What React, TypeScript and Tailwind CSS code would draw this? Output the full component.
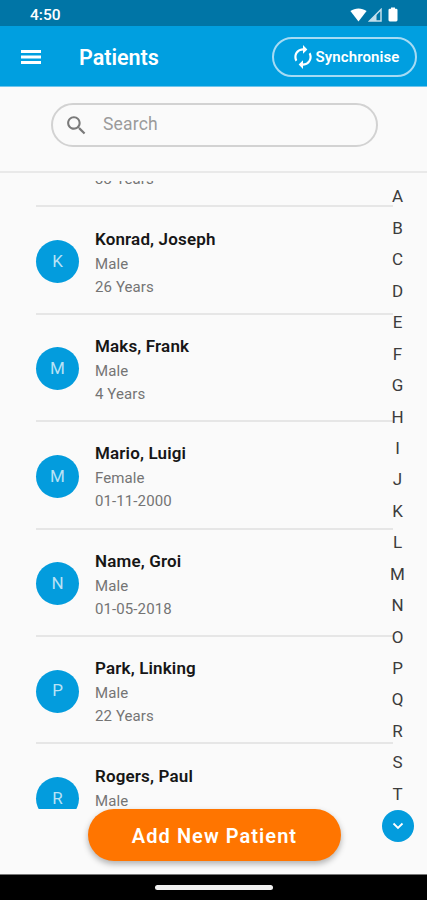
import React from "react";

type Patient = { name: string; gender: string; age: string };

const patients: Patient[] = [
  { name: "Jones, Mary", gender: "Female", age: "33 Years" },
  { name: "Konrad, Joseph", gender: "Male", age: "26 Years" },
  { name: "Maks, Frank", gender: "Male", age: "4 Years" },
  { name: "Mario, Luigi", gender: "Female", age: "01-11-2000" },
  { name: "Name, Groi", gender: "Male", age: "01-05-2018" },
  { name: "Park, Linking", gender: "Male", age: "22 Years" },
  { name: "Rogers, Paul", gender: "Male", age: "41 Years" },
];

const letters = "ABCDEFGHIJKLMNOPQRST".split("");

function StatusBar() {
  return (
    <div className="flex h-[26px] shrink-0 items-center justify-between bg-[#0075a6] pl-[30px] pr-[29px] pt-[3px] text-white">
      <span className="pt-[2px] text-[15.5px] font-medium leading-none">4:50</span>
      <div className="flex items-center">
        <svg className="mr-[1px]" width="17" height="14" viewBox="0 0 17 14">
          <path d="M0.4 3.1C5 -0.5 12 -0.5 16.6 3.1L8.5 13.5z" fill="currentColor" />
        </svg>
        <svg className="mr-[6px]" width="14" height="14" viewBox="0 0 14 14">
          <path d="M13 1.5V13H1.5z" fill="none" stroke="#c3dfec" strokeWidth="1.5" />
          <path d="M8.5 6V13H1.5z" fill="#c3dfec" />
        </svg>
        <svg width="10" height="15" viewBox="0 0 10 15">
          <path d="M3 0.4h4v1.4h1.2q1.3 0 1.3 1.3v10q0 1.4-1.3 1.4H1.8Q0.5 14.5 0.5 13.1v-10q0-1.3 1.3-1.3H3z" fill="currentColor" />
        </svg>
      </div>
    </div>
  );
}

function AppBar() {
  return (
    <header className="flex h-[61px] shrink-0 items-center border-b border-[#6fc5ec] bg-[#009fe0] pl-[21px] pr-[10px] pt-[2px] text-white">
      <svg width="20" height="14" viewBox="0 0 20 14" fill="currentColor">
        <path d="M0 0h20v3H0zM0 5.5h20v3H0zM0 11h20V14H0z" />
      </svg>
      <h1 className="ml-[38px] grow pt-[2px] text-[21.5px] font-semibold leading-none">Patients</h1>
      <button className="flex h-10 w-[145px] items-center rounded-full border-2 border-[#a5dbf4] pl-[15.5px]">
        <svg width="26" height="26" viewBox="0 0 24 24" fill="currentColor">
          <path d="M12 6v3l4-4-4-4v3c-4.42 0-8 3.58-8 8 0 1.57.46 3.03 1.24 4.26L6.7 14.8c-.45-.83-.7-1.79-.7-2.8 0-3.31 2.69-6 6-6zm6.76 1.74L17.3 9.2c.44.84.7 1.79.7 2.8 0 3.31-2.69 6-6 6v-3l-4 4 4 4v-3c4.42 0 8-3.58 8-8 0-1.57-.46-3.03-1.24-4.26z" />
        </svg>
        <span className="text-[15px] font-semibold leading-[20px] tracking-[0.1px]">Synchronise</span>
      </button>
    </header>
  );
}

function SearchArea() {
  return (
    <div className="h-[86px] shrink-0 border-b-2 border-[#e9e9e9] pl-[51px] pt-[16px]">
      <div className="flex h-[44px] w-[327px] items-center rounded-full border-2 border-[#d2d2d2] pl-[11px]">
        <svg width="25" height="25" viewBox="0 0 24 24" fill="#7a7a7a">
          <path d="M15.5 14h-.79l-.28-.27C15.41 12.59 16 11.11 16 9.5 16 5.91 13.09 3 9.5 3S3 5.91 3 9.5 5.91 16 9.5 16c1.61 0 3.09-.59 4.23-1.57l.27.28v.79l5 4.99L20.49 19l-4.99-5zm-6 0C7.01 14 5 11.99 5 9.5S7.01 5 9.5 5 14 7.01 14 9.5 11.99 14 9.5 14z" />
        </svg>
        <span className="mb-[2px] ml-[14px] text-[17.5px] leading-[24px] tracking-[0.2px] text-[#9b9b9b]">Search</span>
      </div>
    </div>
  );
}

function PatientRow({ name, gender, age }: Patient) {
  return (
    <li className="flex h-[107.4px] items-center border-b-2 border-[#e6e6e6]">
      <div className="mt-[3px] flex size-[43px] items-center justify-center rounded-full bg-[#039cdd] text-[17px] text-[#b9e2f5]">
        {name[0]}
      </div>
      <div className="ml-4 mt-[6px] whitespace-nowrap text-[15px] leading-[23px] tracking-[0.1px] text-[#747474]">
        <p className="mb-[2px] text-[17px] font-semibold tracking-[0.15px] text-[#161616]">{name}</p>
        <p>{gender}</p>
        <p>{age}</p>
      </div>
    </li>
  );
}

export default function App() {
  return (
    <div className="flex h-[900px] w-[427px] flex-col overflow-hidden bg-[#fafafa] font-[Roboto,sans-serif]">
      <StatusBar />
      <AppBar />
      <SearchArea />
      <main className="mt-2 flex h-[628px] shrink-0 overflow-hidden pl-9">
        <ul className="-mt-[81px] w-[357px]">
          {patients.map((p) => (
            <PatientRow key={p.name} {...p} />
          ))}
        </ul>
        <nav className="flex w-[9px] flex-col items-center pt-[0.5px] text-[17px] text-[#3c3c3c]">
          {letters.map((l) => (
            <span key={l} className="flex h-[31.45px] shrink-0 items-center">
              {l}
            </span>
          ))}
        </nav>
      </main>
      <div className="flex h-[66px] shrink-0 items-start justify-between border-b border-[#777] pl-[88px] pr-[13px]">
        <button className="h-[52px] w-[253px] rounded-full bg-[#ff7500] pt-px text-[20px] font-semibold tracking-[1.05px] text-white shadow-[0_3px_6px_rgba(0,0,0,0.3)]">
          Add New Patient
        </button>
        <button className="mt-[0.5px] flex size-8 items-center justify-center rounded-full bg-[#039cdd]">
          <svg width="12" height="8" viewBox="0 0 12 8" fill="none" stroke="white" strokeWidth="1.8">
            <path d="M1.5 1.5L6 6l4.5-4.5" />
          </svg>
        </button>
      </div>
      <footer className="flex grow items-start justify-center bg-black pt-[10px]">
        <span className="h-[5px] w-[118px] rounded-sm bg-[#f0f0f0]" />
      </footer>
    </div>
  );
}
